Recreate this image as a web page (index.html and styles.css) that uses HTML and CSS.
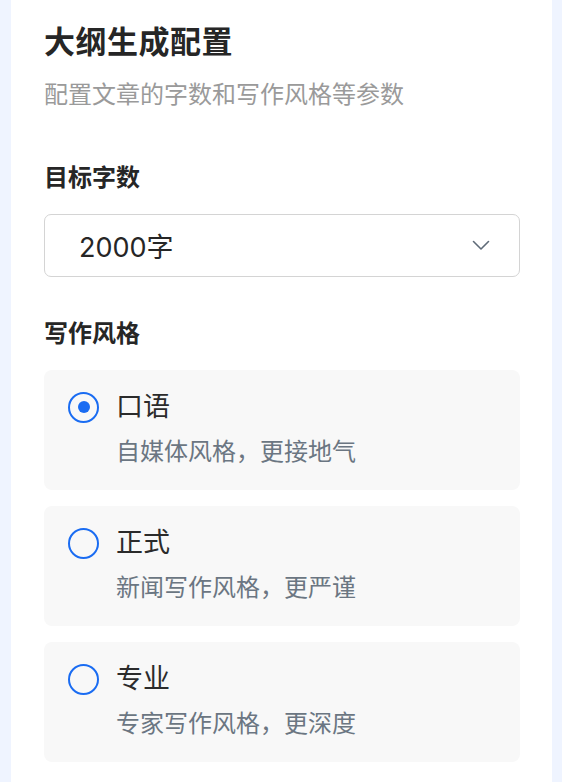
FILE: index.html
```html
<!DOCTYPE html>
<html lang="zh-CN">
<head>
    <meta charset="UTF-8">
    <meta name="viewport" content="width=device-width, initial-scale=1.0">
    <title>大纲生成配置</title>
    <link rel="stylesheet" href="styles.css">
</head>
<body>
    <div class="panel">
        <h1 class="title">大纲生成配置</h1>
        <p class="subtitle">配置文章的字数和写作风格等参数</p>

        <div class="label label-words">目标字数</div>
        <div class="select">
            <span class="select-value">2000字</span>
            <svg class="chevron" width="18" height="11" viewBox="0 0 18 11">
                <polyline points="1.5,1.5 9,9 16.5,1.5" fill="none" stroke="#5f6b78" stroke-width="1.6" stroke-linecap="round" stroke-linejoin="round"/>
            </svg>
        </div>

        <div class="label label-style">写作风格</div>
        <div class="options">
            <div class="option checked">
                <span class="radio"></span>
                <div class="option-title">口语</div>
                <div class="option-desc">自媒体风格，更接地气</div>
            </div>
            <div class="option">
                <span class="radio"></span>
                <div class="option-title">正式</div>
                <div class="option-desc">新闻写作风格，更严谨</div>
            </div>
            <div class="option">
                <span class="radio"></span>
                <div class="option-title">专业</div>
                <div class="option-desc">专家写作风格，更深度</div>
            </div>
        </div>
    </div>
</body>
</html>
```

FILE: styles.css
```css
body {
    margin: 0;
    padding: 0;
    background-color: #eff4ff;
    font-family: 'Inter', 'Noto Sans CJK SC', sans-serif;
}
.panel {
    margin-left: 11px;
    width: 541px;
    min-height: 782px;
    box-sizing: border-box;
    padding: 22px 32px 0 33px;
    background-color: #fff;
}
.title {
    margin: 0;
    font-size: 31px;
    line-height: 40px;
    font-weight: 700;
    color: #262626;
    letter-spacing: 0.5px;
}
.subtitle {
    margin: 17px 0 0;
    font-size: 24px;
    line-height: 32px;
    color: #9a9a9a;
}
.label {
    font-size: 24px;
    line-height: 32px;
    font-weight: 600;
    color: #262626;
}
.label-words {
    margin-top: 51px;
}
.label-style {
    margin-top: 41px;
}
.select {
    margin-top: 20px;
    height: 63px;
    box-sizing: border-box;
    border: 1.5px solid #d4d4d4;
    border-radius: 7px;
    display: flex;
    align-items: center;
    justify-content: space-between;
    padding: 0 29px 0 34px;
}
.select-value {
    font-size: 27px;
    color: #262626;
}
.options {
    margin-top: 20px;
    display: flex;
    flex-direction: column;
    gap: 16px;
}
.option {
    height: 120px;
    box-sizing: border-box;
    padding: 20px 24px 0;
    background-color: #f8f8f8;
    border-radius: 8px;
    display: grid;
    grid-template-columns: 31px 1fr;
    grid-template-rows: 34px 32px;
    column-gap: 17px;
    row-gap: 12px;
}
.radio {
    align-self: center;
    width: 31px;
    height: 31px;
    box-sizing: border-box;
    border: 2px solid #1a6cf2;
    border-radius: 50%;
    display: flex;
    align-items: center;
    justify-content: center;
}
.option.checked .radio::after {
    content: '';
    width: 12px;
    height: 12px;
    border-radius: 50%;
    background-color: #1a6cf2;
}
.option-title {
    font-size: 27px;
    line-height: 34px;
    color: #2b2b2b;
}
.option-desc {
    grid-column: 2;
    font-size: 24px;
    line-height: 32px;
    color: #6b7682;
}
```
